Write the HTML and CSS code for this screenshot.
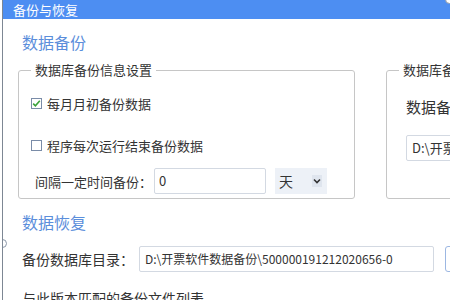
FILE: index.html
```html
<!DOCTYPE html>
<html lang="zh-CN">
<head>
<meta charset="utf-8">
<title>备份与恢复</title>
<link rel="stylesheet" href="styles.css">
</head>
<body>
<div class="window">
  <div class="titlebar">备份与恢复</div>
  <span class="handle handle-tr"></span>
  <span class="handle handle-l"></span>
  <div class="content">
    <h2 class="heading">数据备份</h2>
    <div class="groups">
      <fieldset class="group group-main">
        <legend>数据库备份信息设置</legend>
        <label class="check-row">
          <span class="checkbox checked">
            <svg viewBox="0 0 11 11" width="11" height="11"><path d="M2.2 5.6 L4.4 7.8 L8.8 2.8" fill="none" stroke="#3aa23a" stroke-width="1.6"/></svg>
          </span>
          <span>每月月初备份数据</span>
        </label>
        <label class="check-row second">
          <span class="checkbox"></span>
          <span>程序每次运行结束备份数据</span>
        </label>
        <div class="interval-row">
          <span class="interval-label">间隔一定时间备份：</span>
          <span class="input interval-input">0</span>
          <span class="select">天
            <svg class="chev" viewBox="0 0 8 6" width="8" height="6"><path d="M1 1.5 L4 4.5 L7 1.5" fill="none" stroke="#333" stroke-width="1.6"/></svg>
          </span>
        </div>
      </fieldset>
      <fieldset class="group group-side">
        <legend>数据库备份路径设置</legend>
        <div class="side-label">数据备份路径：</div>
        <span class="input side-input">D:\开票软件数据备份</span>
      </fieldset>
    </div>
    <h2 class="heading restore">数据恢复</h2>
    <div class="dir-row">
      <span class="dir-label">备份数据库目录：</span>
      <span class="input dir-input">D:\开票软件数据备份\500000191212020656-0</span>
      <span class="button"></span>
    </div>
    <div class="list-label">与此版本匹配的备份文件列表</div>
  </div>
</div>
</body>
</html>
```

FILE: styles.css
```css
html, body {
  margin: 0;
  padding: 0;
  background: #ffffff;
}
body {
  font-family: "Noto Sans CJK SC", "Microsoft YaHei", sans-serif;
  color: #333333;
  width: 450px;
  height: 300px;
  overflow: hidden;
}
.window {
  position: relative;
  margin-left: 2px;
  width: 448px;
  height: 300px;
  border-left: 1px solid #7d8794;
  background: #ffffff;
  overflow: hidden;
}
.titlebar {
  height: 19px;
  line-height: 19px;
  background: #4d8ef2;
  color: #ffffff;
  font-size: 13px;
  padding-left: 10px;
}
.handle {
  position: absolute;
  width: 9px;
  height: 9px;
  border-radius: 50%;
  background: #ffffff;
  border: 1px solid #8a96a8;
  box-sizing: border-box;
}
.handle-tr { right: -3px; top: -5px; }
.handle-l { left: -5px; top: 239px; }
.content {
  padding-left: 15px;
}
.heading {
  margin: 12px 0 0 4px;
  font-size: 16px;
  font-weight: normal;
  line-height: 22px;
  color: #5b8edb;
}
.groups {
  display: flex;
  gap: 31px;
  margin-top: 8px;
}
.group {
  margin: 0;
  border: 1px solid #c6c6c6;
  border-radius: 3px;
  padding: 0 12px 4px 12px;
  min-width: 0;
  flex: none;
}
.group legend {
  padding: 0 4px;
  font-size: 13px;
  line-height: 18px;
  color: #333333;
}
.group-main {
  width: 311px;
  padding-top: 12px;
}
.group-side {
  width: 200px;
}
.check-row {
  display: flex;
  align-items: center;
  gap: 5px;
  height: 24px;
  font-size: 13px;
}
.check-row.second {
  margin-top: 18px;
}
.checkbox {
  width: 11px;
  height: 11px;
  border: 1px solid #7a8ca8;
  box-sizing: border-box;
  background: #ffffff;
  display: inline-flex;
  align-items: center;
  justify-content: center;
  flex: none;
}
.checkbox svg {
  display: block;
  margin: -1px;
}
.interval-row {
  display: flex;
  align-items: center;
  margin-top: 11px;
  margin-left: 4px;
  height: 26px;
  font-size: 13px;
}
.interval-label {
  width: 119px;
}
.input {
  box-sizing: border-box;
  height: 26px;
  line-height: 24px;
  border: 1px solid #d3d9e2;
  border-radius: 2px;
  padding-left: 4px;
  font-size: 12px;
  color: #333333;
  background: #ffffff;
  white-space: nowrap;
  overflow: hidden;
  flex: none;
}
.interval-input {
  width: 112px;
  font-size: 13px;
}
.select {
  box-sizing: border-box;
  width: 52px;
  height: 26px;
  margin-left: 9px;
  background: #edf1f7;
  display: flex;
  align-items: center;
  justify-content: space-between;
  padding: 0 5px 0 4px;
  font-size: 14px;
}
.chev {
  display: block;
  background: #dfe5ee;
  padding: 3px 1px;
}
.side-label {
  margin: 17px 0 0 7px;
  font-size: 15px;
  line-height: 22px;
  white-space: nowrap;
}
.side-input {
  display: block;
  margin: 17px 0 0 7px;
  width: 220px;
  padding-left: 5px;
  font-size: 13px;
}
.restore {
  margin-top: 12px;
}
.dir-row {
  display: flex;
  align-items: center;
  margin: 13px 0 0 4px;
  height: 26px;
}
.dir-label {
  width: 117px;
  flex: none;
  font-size: 14px;
  white-space: nowrap;
}
.dir-input {
  width: 295px;
  padding-left: 5px;
}
.button {
  box-sizing: border-box;
  margin-left: 11px;
  width: 40px;
  height: 26px;
  border: 1px solid #9cb7e2;
  border-radius: 3px;
  flex: none;
}
.list-label {
  margin: 17px 0 0 4px;
  font-size: 14px;
  line-height: 18px;
  white-space: nowrap;
}
```
